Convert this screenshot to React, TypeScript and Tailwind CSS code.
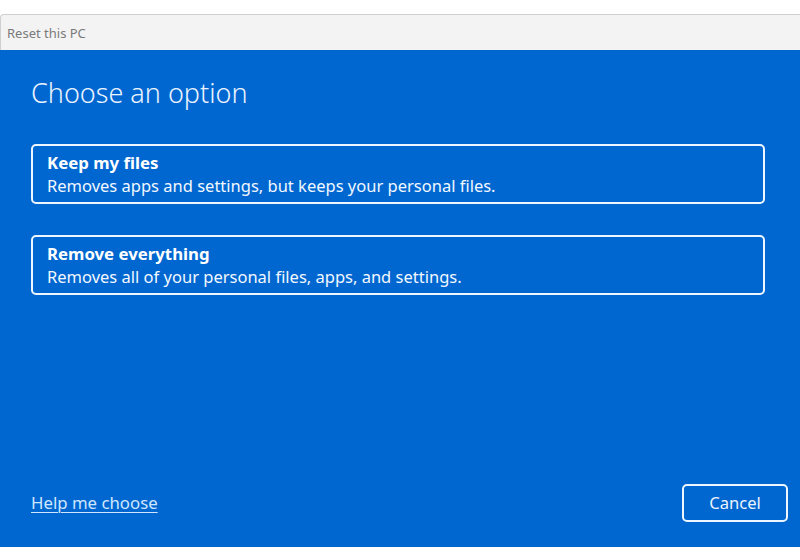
import React from "react";

export default function App() {
  const font = { fontFamily: '"Noto Sans", "Open Sans", sans-serif' };
  return (
    <div className="w-[800px] h-[560px] bg-white flex flex-col overflow-hidden" style={font}>
      <div className="h-[14px] shrink-0" />
      <div className="h-[36px] shrink-0 bg-[#f3f3f3] border-t border-l border-[#cfcfcf] rounded-tl-[4px] flex items-center pl-[6px]">
        <span className="text-[13px] text-[#7a7a7a] mt-[2px]">Reset this PC</span>
      </div>
      <div className="h-[497px] shrink-0 bg-[#0067d0] flex flex-col pl-[31px] text-white">
        <h1 className="mt-[25px] text-[27px] font-light leading-[36px] text-[#eaf3ff]">Choose an option</h1>
        <div className="mt-[33px] mr-[35px] flex flex-col gap-[31px]">
          <div className="h-[60px] border-2 border-[#eef6ff] rounded-[5px] px-[14px] flex flex-col justify-center">
            <div className="text-[16.8px] font-bold leading-[23px]">Keep my files</div>
            <div className="text-[16.5px] leading-[23px] text-[#f2f8ff]">Removes apps and settings, but keeps your personal files.</div>
          </div>
          <div className="h-[60px] border-2 border-[#eef6ff] rounded-[5px] px-[14px] flex flex-col justify-center">
            <div className="text-[16.8px] font-bold leading-[23px]">Remove everything</div>
            <div className="text-[16.5px] leading-[23px] text-[#f2f8ff]">Removes all of your personal files, apps, and settings.</div>
          </div>
        </div>
        <div className="flex-1" />
        <div className="mb-[25px] flex items-center justify-between">
          <a className="text-[16.8px] text-[#cfe6ff] underline underline-offset-[3px] decoration-1">Help me choose</a>
          <button className="w-[106px] h-[38px] border-2 border-[#eef6ff] rounded-[5px] text-[16.6px] text-[#eaf3ff] mr-[12px]">Cancel</button>
        </div>
      </div>
    </div>
  );
}
